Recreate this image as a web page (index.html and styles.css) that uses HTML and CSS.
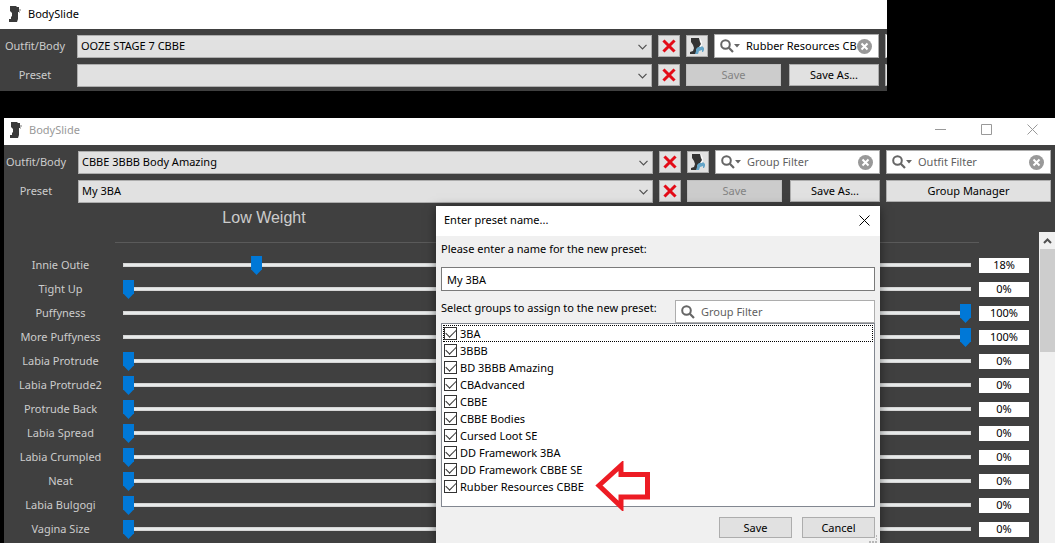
FILE: index.html
```html
<!DOCTYPE html>
<html lang="en">
  <head>
    <meta charset="UTF-8">
    <meta name="viewport" content="width=device-width, initial-scale=1.0">
    <title>BodySlide</title>
    <link rel="stylesheet" href="styles.css">
  </head>
  <body>

    <!-- Shared icons -->
    <svg class="icon-defs" aria-hidden="true">
      <symbol id="icon-app" viewBox="0 0 12 16">
        <path d="M1 0h6l1 1h2v2l1 1v2H9v7l-1 3H0v-3h2v-2l1-1V7L1 5z" fill="#3a3a3a"/>
        <path d="M10 3h2v2h-1v2h-1z" fill="#bbb"/>
      </symbol>
      <symbol id="icon-chevron" viewBox="0 0 9 6">
        <path d="M0.5 0.8l4 4 4-4" fill="none" stroke="#505050" stroke-width="1.2"/>
      </symbol>
      <symbol id="icon-delete" viewBox="0 0 14 14">
        <path d="M2.5 2.5l9 9M11.5 2.5l-9 9" stroke="#e30b17" stroke-width="3" stroke-linecap="square"/>
      </symbol>
      <symbol id="icon-body" viewBox="0 0 16 16">
        <path d="M9 0h2l2 4v4l-3 2-3 1z" fill="#f8f8f8"/>
        <path d="M2 0h8l1 4 1 2-2 3-2 3-1 4H1v-2l3-1 1-3-1-3-2-3z" fill="#333"/>
        <path d="M7 11l2-2 3 0 1-1 2 2v2l-1 2h-1v-2l-3 1-1 3H6l1-3z" fill="#65a5c8"/>
      </symbol>
      <symbol id="icon-search" viewBox="0 0 14 14">
        <circle cx="5.5" cy="5.5" r="4.3" fill="none" stroke="#666" stroke-width="2"/>
        <path d="M8.8 8.8l4.2 4.2" stroke="#666" stroke-width="2.2"/>
      </symbol>
      <symbol id="icon-arrow" viewBox="0 0 6 4">
        <path d="M0 0h6l-3 3.5z" fill="#666"/>
      </symbol>
      <symbol id="icon-clear" viewBox="0 0 15 15">
        <circle cx="7.5" cy="7.5" r="7.5" fill="#999"/>
        <path d="M4.5 4.5l6 6M10.5 4.5l-6 6" stroke="#fff" stroke-width="2"/>
      </symbol>
      <symbol id="icon-close" viewBox="0 0 11 11">
        <path d="M0.5 0.5l10 10M10.5 0.5l-10 10" stroke="currentColor" fill="none"/>
      </symbol>
    </svg>

    <!-- Small window, cut off at the right -->
    <section class="window window-top">
      <header class="titlebar">
        <svg class="app-icon"><use href="#icon-app"/></svg>
        <span>BodySlide</span>
      </header>
      <div class="toolbar">
        <label for="top-outfit">Outfit/Body</label>
        <div class="combo">
          <select id="top-outfit"><option>OOZE STAGE 7 CBBE</option></select>
          <svg class="chevron"><use href="#icon-chevron"/></svg>
        </div>
        <button class="icon-button" aria-label="Delete outfit"><svg><use href="#icon-delete"/></svg></button>
        <div class="tools">
          <button class="icon-button" aria-label="Choose body"><svg class="body-icon"><use href="#icon-body"/></svg></button>
          <div class="search">
            <svg class="search-icon"><use href="#icon-search"/></svg>
            <svg class="search-arrow"><use href="#icon-arrow"/></svg>
            <input type="text" aria-label="Group Filter" value="Rubber Resources CBBE">
            <button class="clear" aria-label="Clear"><svg><use href="#icon-clear"/></svg></button>
          </div>
        </div>
        <div class="search"></div>

        <label for="top-preset">Preset</label>
        <div class="combo">
          <select id="top-preset"><option></option></select>
          <svg class="chevron"><use href="#icon-chevron"/></svg>
        </div>
        <button class="icon-button" aria-label="Delete preset"><svg><use href="#icon-delete"/></svg></button>
        <div class="tools">
          <button class="button save" disabled>Save</button>
          <button class="button save-as">Save As...</button>
        </div>
        <button class="button" aria-label="Group Manager"></button>
      </div>
    </section>

    <!-- Main window -->
    <section class="window window-main">
      <header class="titlebar inactive">
        <svg class="app-icon"><use href="#icon-app"/></svg>
        <span>BodySlide</span>
        <div class="window-buttons">
          <button aria-label="Minimize"><svg viewBox="0 0 11 11"><path d="M0 5.5h11" stroke="currentColor"/></svg></button>
          <button aria-label="Maximize"><svg viewBox="0 0 11 11"><path d="M0.5 0.5h10v10h-10z" stroke="currentColor" fill="none"/></svg></button>
          <button aria-label="Close"><svg><use href="#icon-close"/></svg></button>
        </div>
      </header>
      <div class="toolbar">
        <label for="outfit">Outfit/Body</label>
        <div class="combo">
          <select id="outfit"><option>CBBE 3BBB Body Amazing</option></select>
          <svg class="chevron"><use href="#icon-chevron"/></svg>
        </div>
        <button class="icon-button" aria-label="Delete outfit"><svg><use href="#icon-delete"/></svg></button>
        <div class="tools">
          <button class="icon-button" aria-label="Choose body"><svg class="body-icon"><use href="#icon-body"/></svg></button>
          <div class="search">
            <svg class="search-icon"><use href="#icon-search"/></svg>
            <svg class="search-arrow"><use href="#icon-arrow"/></svg>
            <input type="text" aria-label="Group Filter" placeholder="Group Filter">
            <button class="clear" aria-label="Clear"><svg><use href="#icon-clear"/></svg></button>
          </div>
        </div>
        <div class="search">
          <svg class="search-icon"><use href="#icon-search"/></svg>
          <svg class="search-arrow"><use href="#icon-arrow"/></svg>
          <input type="text" aria-label="Outfit Filter" placeholder="Outfit Filter">
          <button class="clear" aria-label="Clear"><svg><use href="#icon-clear"/></svg></button>
        </div>

        <label for="preset">Preset</label>
        <div class="combo">
          <select id="preset"><option>My 3BA</option></select>
          <svg class="chevron"><use href="#icon-chevron"/></svg>
        </div>
        <button class="icon-button" aria-label="Delete preset"><svg><use href="#icon-delete"/></svg></button>
        <div class="tools">
          <button class="button save" disabled>Save</button>
          <button class="button save-as">Save As...</button>
        </div>
        <button class="button">Group Manager</button>
      </div>

      <div class="content">
        <div class="sliders">
          <h2>Low Weight</h2>
          <hr>
          <div class="slider-row">
            <label for="s1">Innie Outie</label>
            <input type="range" id="s1" step="0.1" value="15.3">
            <input type="text" class="value" aria-label="Innie Outie value" value="18%">
          </div>
          <div class="slider-row">
            <label for="s2">Tight Up</label>
            <input type="range" id="s2" value="0">
            <input type="text" class="value" aria-label="Tight Up value" value="0%">
          </div>
          <div class="slider-row">
            <label for="s3">Puffyness</label>
            <input type="range" id="s3" value="100">
            <input type="text" class="value" aria-label="Puffyness value" value="100%">
          </div>
          <div class="slider-row">
            <label for="s4">More Puffyness</label>
            <input type="range" id="s4" value="100">
            <input type="text" class="value" aria-label="More Puffyness value" value="100%">
          </div>
          <div class="slider-row">
            <label for="s5">Labia Protrude</label>
            <input type="range" id="s5" value="0">
            <input type="text" class="value" aria-label="Labia Protrude value" value="0%">
          </div>
          <div class="slider-row">
            <label for="s6">Labia Protrude2</label>
            <input type="range" id="s6" value="0">
            <input type="text" class="value" aria-label="Labia Protrude2 value" value="0%">
          </div>
          <div class="slider-row">
            <label for="s7">Protrude Back</label>
            <input type="range" id="s7" value="0">
            <input type="text" class="value" aria-label="Protrude Back value" value="0%">
          </div>
          <div class="slider-row">
            <label for="s8">Labia Spread</label>
            <input type="range" id="s8" value="0">
            <input type="text" class="value" aria-label="Labia Spread value" value="0%">
          </div>
          <div class="slider-row">
            <label for="s9">Labia Crumpled</label>
            <input type="range" id="s9" value="0">
            <input type="text" class="value" aria-label="Labia Crumpled value" value="0%">
          </div>
          <div class="slider-row">
            <label for="s10">Neat</label>
            <input type="range" id="s10" value="0">
            <input type="text" class="value" aria-label="Neat value" value="0%">
          </div>
          <div class="slider-row">
            <label for="s11">Labia Bulgogi</label>
            <input type="range" id="s11" value="0">
            <input type="text" class="value" aria-label="Labia Bulgogi value" value="0%">
          </div>
          <div class="slider-row">
            <label for="s12">Vagina Size</label>
            <input type="range" id="s12" value="0">
            <input type="text" class="value" aria-label="Vagina Size value" value="0%">
          </div>
        </div>
        <div class="scrollbar" aria-hidden="true">
          <div class="scroll-up"><svg viewBox="0 0 9 6"><path d="M1 5l3.5-3.5 3.5 3.5" fill="none" stroke="#505050" stroke-width="2"/></svg></div>
          <div class="scroll-thumb"></div>
        </div>
      </div>

      <!-- Save preset dialog -->
      <div class="dialog" role="dialog" aria-labelledby="dialog-title">
        <header class="dialog-title">
          <span id="dialog-title">Enter preset name...</span>
          <button aria-label="Close"><svg><use href="#icon-close"/></svg></button>
        </header>
        <form class="dialog-body">
          <label for="preset-name">Please enter a name for the new preset:</label>
          <input type="text" id="preset-name" class="preset-name" value="My 3BA">
          <div class="group-head">
            <span>Select groups to assign to the new preset:</span>
            <div class="search">
              <svg class="search-icon"><use href="#icon-search"/></svg>
              <input type="text" aria-label="Group Filter" placeholder="Group Filter">
            </div>
          </div>
          <div class="group-list">
            <label class="focused"><input type="checkbox" checked>3BA</label>
            <label><input type="checkbox" checked>3BBB</label>
            <label><input type="checkbox" checked>BD 3BBB Amazing</label>
            <label><input type="checkbox" checked>CBAdvanced</label>
            <label><input type="checkbox" checked>CBBE</label>
            <label><input type="checkbox" checked>CBBE Bodies</label>
            <label><input type="checkbox" checked>Cursed Loot SE</label>
            <label><input type="checkbox" checked>DD Framework 3BA</label>
            <label><input type="checkbox" checked>DD Framework CBBE SE</label>
            <label><input type="checkbox" checked>Rubber Resources CBBE</label>
          </div>
          <div class="dialog-buttons">
            <button type="button" class="button">Save</button>
            <button type="button" class="button">Cancel</button>
          </div>
        </form>
        <svg class="grip" viewBox="0 0 8 8"><path d="M7 0h1v2h-1zM7 3h1v2h-1zM0 6h2v2h-2zM3 6h2v2h-2zM6 6h2v2h-2z" fill="#b8b8b8"/></svg>
        <svg class="pointer" viewBox="0 0 56 50">
          <path d="M4 24.500L26 4.500V13.500H52.500V36H26V45.500Z" fill="none" stroke="#ed1c24" stroke-width="5"/>
        </svg>
      </div>
    </section>

  </body>
</html>
```
FILE: styles.css
```css
* {
  box-sizing: border-box;
}

body {
  margin: 0;
  height: 100vh;
  display: flex;
  flex-direction: column;
  gap: 27px;
  overflow: hidden;
  background-color: #000;
  color: #000;
  font-family: 'Noto Sans', 'Open Sans', sans-serif;
  font-size: 11px;
  line-height: 16px;
}

button, input, select {
  margin: 0;
  padding: 0;
  font: inherit;
  color: inherit;
}

button {
  border: none;
  background: none;
}

svg {
  display: block;
  flex: none;
}

.icon-defs {
  position: absolute;
  width: 0;
  height: 0;
}

/* Windows */
.window {
  background-color: #404040;
}

.window-top {
  margin-right: 168px;
  overflow: hidden;
  flex: none;
}

.window-top .toolbar {
  margin-right: -168px;
  padding: 5px 5px 4px 3px;
}

.window-main {
  position: relative;
  flex: 1;
  display: flex;
  flex-direction: column;
  min-height: 0;
  margin-left: 4px;
}

.titlebar {
  display: flex;
  align-items: center;
  height: 29px;
  padding-bottom: 2px;
  padding-left: 9px;
  gap: 7px;
  background-color: #fff;
}

.titlebar.inactive {
  flex: none;
  height: 27px;
  padding-bottom: 4px;
  padding-left: 6px;
  color: #999;
}

.app-icon {
  width: 12px;
  height: 16px;
}

.window-buttons {
  display: flex;
  margin-left: auto;
}

.window-buttons button {
  width: 46px;
  height: 23px;
  display: flex;
  align-items: center;
  justify-content: center;
}

.window-buttons svg,
.dialog-title svg {
  width: 11px;
  height: 11px;
}

/* Toolbar */
.toolbar {
  display: grid;
  grid-template-columns: 68px 1fr 22px 193px 165px;
  grid-auto-rows: 24px;
  gap: 5px 6px;
  align-items: center;
  padding: 5px 4px 5px 0;
}

.toolbar label {
  padding-right: 4px;
  text-align: center;
  color: #ccc;
}

.combo {
  position: relative;
}

.combo select {
  display: block;
  width: 100%;
  height: 23px;
  padding: 0 20px 0 3px;
  appearance: none;
  border: 1px solid #adadad;
  border-radius: 0;
  background-color: #e1e1e1;
}

.chevron {
  position: absolute;
  top: 9px;
  right: 5px;
  width: 9px;
  height: 6px;
  pointer-events: none;
}

.icon-button {
  width: 22px;
  height: 22px;
  flex: none;
  display: flex;
  align-items: center;
  justify-content: center;
  border: 1px solid #adadad;
  background-color: #e1e1e1;
}

.icon-button svg {
  width: 14px;
  height: 14px;
}

.icon-button .body-icon {
  width: 16px;
  height: 16px;
}

.tools {
  display: flex;
  align-items: center;
  justify-content: space-between;
}

.tools .search {
  width: 165px;
}

.button {
  height: 22px;
  border: 1px solid #adadad;
  background-color: #e1e1e1;
  text-align: center;
}

.button:disabled {
  border-color: #bfbfbf;
  background-color: #ccc;
  color: #838383;
}

.save {
  width: 95px;
}

.save-as {
  width: 90px;
}

.search {
  display: flex;
  align-items: center;
  height: 24px;
  padding: 0 6px 0 5px;
  border: 1px solid #adadad;
  background-color: #fff;
}

.search input {
  flex: 1;
  min-width: 0;
  margin-left: 6px;
  border: none;
  outline: none;
  background: none;
}

.search input::placeholder {
  color: #5f5f5f;
  opacity: 1;
}

.search-icon {
  width: 14px;
  height: 14px;
}

.search-arrow {
  width: 6px;
  height: 4px;
}

.clear svg {
  width: 15px;
  height: 15px;
}

/* Slider list */
.content {
  flex: 1;
  display: flex;
  min-height: 0;
  overflow: hidden;
}

.sliders {
  flex: 1;
  padding-right: 10px;
}

.sliders h2 {
  width: 298px;
  margin: 0 0 0 111px;
  height: 34px;
  font-family: 'Liberation Sans', Arial, sans-serif;
  font-size: 16px;
  font-weight: normal;
  line-height: 20px;
  text-align: center;
  color: #ccc;
}

.sliders hr {
  height: 1px;
  margin: 0 50px 10px 111px;
  border: none;
  background-color: #5a5a5a;
}

.slider-row {
  display: grid;
  grid-template-columns: 113px 1fr 50px;
  align-items: center;
  height: 24px;
}

.slider-row label {
  text-align: center;
  color: #ccc;
}

.slider-row input[type="range"] {
  height: 20px;
  min-width: 0;
  margin: 0 8px 0 6px;
  appearance: none;
  background: none;
}

.slider-row input[type="range"]::-webkit-slider-runnable-track {
  height: 4px;
  background-color: #e7eaea;
  box-shadow: inset 0 0 0 1px #d6d6d6;
}

.slider-row input[type="range"]::-webkit-slider-thumb {
  appearance: none;
  width: 11px;
  height: 19px;
  margin-top: -7px;
  background-color: #0078d7;
  clip-path: polygon(0 0, 100% 0, 100% 70%, 50% 100%, 0 70%);
}

.value {
  width: 50px;
  height: 15px;
  border: none;
  background-color: #fff;
  text-align: center;
}

.scrollbar {
  width: 16px;
  margin-top: 24px;
  background-color: #f0f0f0;
}

.scroll-up {
  height: 17px;
  display: flex;
  align-items: center;
  justify-content: center;
}

.scroll-up svg {
  width: 9px;
  height: 6px;
}

.scroll-thumb {
  height: 103px;
  margin-left: 1px;
  background-color: #cdcdcd;
}

/* Dialog over the main window */
.dialog {
  position: absolute;
  top: 88px;
  right: 175px;
  bottom: 0;
  left: 432px;
  display: flex;
  flex-direction: column;
  background-color: #f0f0f0;
  box-shadow: 0 2px 10px rgba(0, 0, 0, 0.5);
}

.dialog-title {
  display: flex;
  align-items: center;
  justify-content: space-between;
  flex: none;
  height: 30px;
  padding: 0 10px 2px 8px;
  background-color: #fff;
}

.dialog-body {
  flex: 1;
  display: flex;
  flex-direction: column;
  min-height: 0;
  padding: 5px;
}

.preset-name {
  height: 24px;
  margin: 10px 0 9px;
  padding: 0 5px;
  border: 1px solid #7a7a7a;
  background-color: #fff;
}

.group-head {
  display: flex;
  justify-content: space-between;
}

.group-head .search {
  width: 200px;
  height: 23px;
}

.group-list {
  flex: 1;
  display: flex;
  flex-direction: column;
  padding: 1px;
  border: 1px solid #828790;
  background-color: #fff;
}

.group-list label {
  display: flex;
  align-items: center;
  gap: 3px;
  height: 17px;
  padding-left: 1px;
}

.group-list .focused {
  outline: 1px dotted #000;
  outline-offset: -1px;
}

.group-list input {
  position: relative;
  width: 13px;
  height: 13px;
  appearance: none;
  border: 1px solid #333;
  background-color: #fff;
}

.group-list input:checked::after {
  content: '';
  position: absolute;
  top: 1px;
  left: 1px;
  width: 9px;
  height: 5px;
  border: solid #333;
  border-width: 0 0 1px 1px;
  transform: rotate(-45deg);
}

.dialog-buttons {
  display: flex;
  justify-content: flex-end;
  gap: 10px;
  padding-top: 10px;
}

.dialog-buttons .button {
  width: 73px;
  height: 21px;
}

.grip {
  position: absolute;
  right: 3px;
  bottom: 0;
  width: 8px;
  height: 8px;
}

/* Red arrow marking the last group */
.pointer {
  position: absolute;
  top: 255px;
  left: 159px;
  width: 56px;
  height: 50px;
}
```
